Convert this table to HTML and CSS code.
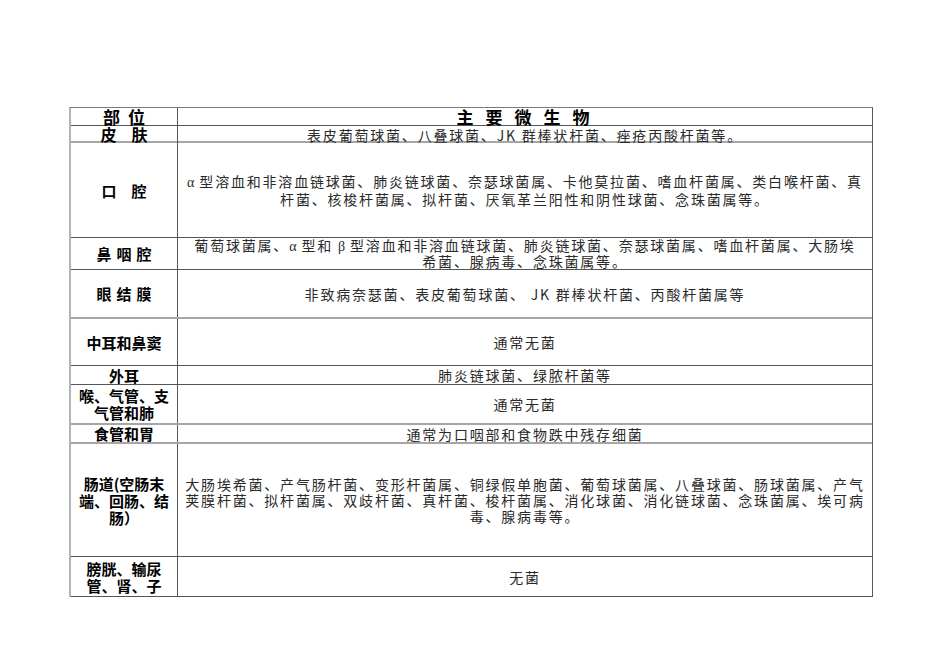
FILE: index.html
```html
<!DOCTYPE html>
<html lang="zh-CN">
<head>
<meta charset="utf-8">
<title>部位与主要微生物</title>
<link rel="stylesheet" href="styles.css">
</head>
<body>
<div class="tbl">
  <div class="row h18">
    <div class="lc head hl">部位</div>
    <div class="rc head hr">主要微生物</div>
  </div>
  <div class="row h17 gb">
    <div class="lc big wide">皮肤</div>
    <div class="rc">表皮葡萄球菌、八叠球菌、JK 群棒状杆菌、痤疮丙酸杆菌等。</div>
  </div>
  <div class="row h95">
    <div class="lc wide">口腔</div>
    <div class="rc"><p><span class="gk">α</span> 型溶血和非溶血链球菌、肺炎链球菌、奈瑟球菌属、卡他莫拉菌、嗜血杆菌属、类白喉杆菌、真<br>杆菌、核梭杆菌属、拟杆菌、厌氧革兰阳性和阴性球菌、念珠菌属等。</p></div>
  </div>
  <div class="row h32">
    <div class="lc mid">鼻咽腔</div>
    <div class="rc tight"><p>葡萄球菌属、<span class="gk">α</span> 型和 <span class="gk">β</span> 型溶血和非溶血链球菌、肺炎链球菌、奈瑟球菌属、嗜血杆菌属、大肠埃<br>希菌、腺病毒、念珠菌属等。</p></div>
  </div>
  <div class="row h49 gb">
    <div class="lc mid">眼结膜</div>
    <div class="rc">非致病奈瑟菌、表皮葡萄球菌、 JK 群棒状杆菌、丙酸杆菌属等</div>
  </div>
  <div class="row h47">
    <div class="lc">中耳和鼻窦</div>
    <div class="rc">通常无菌</div>
  </div>
  <div class="row h19">
    <div class="lc">外耳</div>
    <div class="rc">肺炎链球菌、绿脓杆菌等</div>
  </div>
  <div class="row h40 gb">
    <div class="lc"><p>喉、气管、支<br>气管和肺</p></div>
    <div class="rc">通常无菌</div>
  </div>
  <div class="row h19 gb">
    <div class="lc">食管和胃</div>
    <div class="rc">通常为口咽部和食物跌中残存细菌</div>
  </div>
  <div class="row h113">
    <div class="lc"><p>肠道(空肠末<br>端、回肠、结<br>肠）</p></div>
    <div class="rc"><p>大肠埃希菌、产气肠杆菌、变形杆菌属、铜绿假单胞菌、葡萄球菌属、八叠球菌、肠球菌属、产气<br>荚膜杆菌、拟杆菌属、双歧杆菌、真杆菌、梭杆菌属、消化球菌、消化链球菌、念珠菌属、埃可病<br>毒、腺病毒等。</p></div>
  </div>
  <div class="row h40 last">
    <div class="lc top"><p>膀胱、输尿<br>管、肾、子</p></div>
    <div class="rc">无菌</div>
  </div>
</div>
</body>
</html>
```

FILE: styles.css
```css
html, body {
  margin: 0;
  padding: 0;
  background: #fff;
}

body {
  font-family: "Noto Sans CJK SC", sans-serif;
  color: #111;
}

.tbl {
  margin: 107px 0 0 69px;
  width: 804px;
  box-sizing: border-box;
  border-top: 1px solid #7a7a7a;
  border-left: 2px solid #b4b4b4;
  border-right: 1px solid #5a5a5a;
}

.row {
  display: grid;
  grid-template-columns: 107px 1fr;
  box-sizing: border-box;
  border-bottom: 1px solid #555;
}

.row.gb {
  border-bottom: 2px solid #a6a6a6;
}

.row.last {
  overflow: hidden;
}

.h17 { height: 17px; }
.h18 { height: 18px; }
.h19 { height: 19px; }
.h32 { height: 32px; }
.h40 { height: 40px; }
.h47 { height: 47px; }
.h49 { height: 49px; }
.h95 { height: 95px; }
.h113 { height: 113px; }

.lc, .rc {
  display: flex;
  align-items: center;
  justify-content: center;
  text-align: center;
  white-space: nowrap;
}

.lc p, .rc p {
  margin: 0;
}

.lc {
  border-right: 1px solid #555;
  font-size: 15px;
  line-height: 17px;
  font-weight: 700;
  color: #000;
}

.lc.top {
  align-items: flex-start;
  padding-top: 3px;
}

.lc.big {
  font-size: 16px;
}

.lc.wide {
  letter-spacing: 15px;
  padding-left: 15px;
}

.lc.mid {
  letter-spacing: 5px;
  padding-left: 5px;
}

.rc {
  font-size: 14px;
  line-height: 16px;
  letter-spacing: 1.8px;
  color: #2a2a2a;
  padding: 0 4px;
}

.rc.tight {
  line-height: 15px;
}

.head {
  font-size: 17px;
  line-height: 18px;
  font-weight: 700;
  color: #000;
}

.head.hl {
  letter-spacing: 8px;
  padding-left: 8px;
}

.head.hr {
  letter-spacing: 12px;
  padding-left: 12px;
}

.gk {
  font-family: "Liberation Serif", serif;
  font-size: 14px;
  letter-spacing: 0;
}
```
